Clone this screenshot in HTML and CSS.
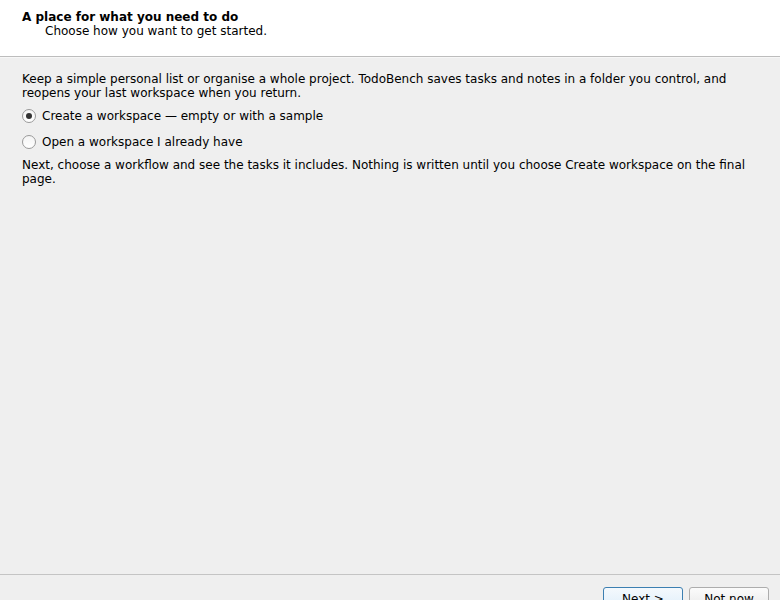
FILE: index.html
```html
<!DOCTYPE html>
<html>
<head>
<meta charset="utf-8">
<link rel="stylesheet" href="styles.css">
</head>
<body>
<div class="wizard">
  <div class="header">
    <div class="title">A place for what you need to do</div>
    <div class="subtitle">Choose how you want to get started.</div>
  </div>
  <div class="content">
    <p class="para">Keep a simple personal list or organise a whole project. TodoBench saves tasks and notes in a folder you control, and reopens your last workspace when you return.</p>
    <div class="radio-row first">
      <span class="radio checked"></span>
      <span class="label">Create a workspace — empty or with a sample</span>
    </div>
    <div class="radio-row">
      <span class="radio"></span>
      <span class="label">Open a workspace I already have</span>
    </div>
    <p class="para note">Next, choose a workflow and see the tasks it includes. Nothing is written until you choose Create workspace on the final page.</p>
  </div>
  <div class="footer">
    <button class="btn default">Next &gt;</button>
    <button class="btn">Not now</button>
  </div>
</div>
</body>
</html>
```
FILE: styles.css
```css
html, body {
  margin: 0;
  padding: 0;
  width: 780px;
  height: 600px;
  overflow: hidden;
}
body {
  font-family: "DejaVu Sans", sans-serif;
  font-size: 12px;
  color: #000;
  background: #efefef;
}
.wizard {
  display: flex;
  flex-direction: column;
  height: 600px;
}
.header {
  flex: none;
  background: #ffffff;
  height: 57px;
  box-sizing: border-box;
  padding: 10px 22px 0 22px;
  border-bottom: 1px solid #bdbdbd;
  line-height: 14px;
}
.title {
  font-weight: bold;
}
.subtitle {
  padding-left: 23px;
}
.content {
  flex: 1;
  padding: 14px 22px 0 22px;
  border-top: 1px solid #f7f7f7;
}
.para {
  margin: 0;
  line-height: 14px;
}
.radio-row {
  display: flex;
  align-items: center;
  height: 18px;
  margin-top: 8px;
}
.radio-row.first {
  margin-top: 7px;
}
.radio {
  width: 12px;
  height: 12px;
  border: 1px solid #9a9a9a;
  border-radius: 50%;
  background: linear-gradient(#f4f4f4, #ffffff);
  margin-right: 6px;
  display: flex;
  align-items: center;
  justify-content: center;
  box-sizing: content-box;
}
.radio.checked::after {
  content: "";
  width: 6px;
  height: 6px;
  border-radius: 50%;
  background: #333333;
}
.note {
  margin-top: 7px;
}
.footer {
  flex: none;
  border-top: 1px solid #c4c4c4;
  display: flex;
  justify-content: flex-end;
  align-items: flex-start;
  padding: 12px 11px 0 0;
  box-sizing: border-box;
  height: 26px;
  gap: 6px;
  overflow: visible;
}
.btn {
  flex: none;
  font-family: "DejaVu Sans", sans-serif;
  font-size: 12px;
  width: 80px;
  height: 26px;
  border: 1px solid #adadad;
  border-radius: 3px;
  background: linear-gradient(#fbfbfb, #e6e6e6);
  color: #000;
  line-height: 18px;
  display: flex;
  justify-content: center;
  align-items: flex-start;
  padding: 2px 0 0 0;
}
.btn.default {
  border-color: #3c7fb1;
  background: linear-gradient(#f4f9fd, #dcecfa);
}
```
